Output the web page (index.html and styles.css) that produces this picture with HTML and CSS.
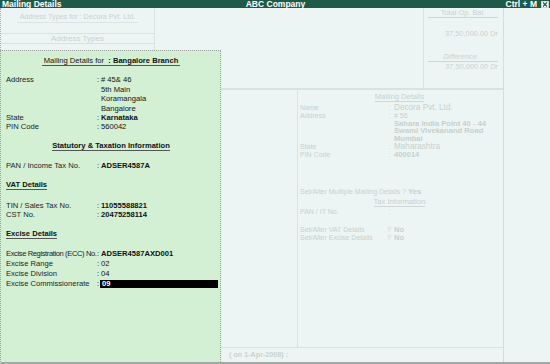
FILE: index.html
```html
<!DOCTYPE html>
<html lang="en">
<head>
    <meta charset="UTF-8">
    <title>Mailing Details</title>
    <link rel="stylesheet" href="styles.css">
</head>
<body>

    <div class="titlebar">
        <span class="tb-left">Mailing Details</span>
        <span class="tb-center">ABC Company</span>
        <span class="tb-right">Ctrl + M
            <svg class="close-box" width="8" height="7" viewBox="0 0 8 7">
                <rect x="0.5" y="0.5" width="7" height="6" fill="#fff" stroke="#c8d8d2"/>
                <path d="M2 1.5 L6 5.5 M6 1.5 L2 5.5" stroke="#1f5a48" stroke-width="1.2"/>
            </svg>
        </span>
    </div>

    <div class="screen">
        <div class="main">
            <!-- верх: типы адресов и сальдо -->
            <div class="top">
                <div class="addr-types">
                    <div class="at-title"><span>Address Types for : Decora Pvt. Ltd.</span></div>
                    <div class="at-head">Address Types</div>
                </div>
                <div class="top-gap"></div>
                <div class="opbal">
                    <div class="ob-title">Total Op. Bal.</div>
                    <div class="ob-amount">37,50,000.00 Dr</div>
                    <div class="ob-diff">Difference</div>
                    <div class="ob-amount ob-italic">37,50,000.00 Dr</div>
                </div>
            </div>

            <div class="mid">
                <div class="mid-left"></div>
                <div class="company">
                    <div class="co-head"><span>Mailing Details</span></div>
                    <div class="co-rows">
                        <span class="co-label">Name</span><span class="co-colon">:</span><span class="co-value big">Decora Pvt. Ltd.</span>
                        <span class="co-label">Address</span><span class="co-colon">:</span><span class="co-value"># 56</span>
                        <span class="co-label"></span><span class="co-colon"></span><span class="co-value strong">Sahara India Point 40 - 44</span>
                        <span class="co-label"></span><span class="co-colon"></span><span class="co-value strong">Swami Vivekanand Road</span>
                        <span class="co-label"></span><span class="co-colon"></span><span class="co-value strong">Mumbai</span>
                        <span class="co-label">State</span><span class="co-colon">:</span><span class="co-value big">Maharashtra</span>
                        <span class="co-label">PIN Code</span><span class="co-colon">:</span><span class="co-value strong">400014</span>
                    </div>
                    <div class="co-line co-multi">Set/Alter Multiple Mailing Details ? <b>Yes</b></div>
                    <div class="co-head co-tax"><span>Tax Information</span></div>
                    <div class="co-rows co-pan">
                        <span class="co-label">PAN / IT No.</span><span class="co-colon">:</span><span class="co-value"></span>
                    </div>
                    <div class="co-rows co-flags">
                        <span class="co-label">Set/Alter VAT Details</span><span class="co-colon q">?</span><span class="co-value strong">No</span>
                        <span class="co-label">Set/Alter Excise Details</span><span class="co-colon q">?</span><span class="co-value strong">No</span>
                    </div>
                </div>
            </div>

            <div class="foot">( on 1-Apr-2008) :</div>
        </div>
        <div class="aside"></div>

        <!-- окно поверх экрана -->
        <div class="popup">
            <div class="pop-head"><span>Mailing Details for&nbsp; <b>: Bangalore Branch</b></span></div>

            <div class="pop-rows pop-address">
                <span class="p-label">Address</span><span class="p-colon">:</span><span class="p-value"># 45&amp; 46</span>
                <span class="p-label"></span><span class="p-colon"></span><span class="p-value">5th Main</span>
                <span class="p-label"></span><span class="p-colon"></span><span class="p-value">Koramangala</span>
                <span class="p-label"></span><span class="p-colon"></span><span class="p-value">Bangalore</span>
                <span class="p-label">State</span><span class="p-colon">:</span><span class="p-value bold">Karnataka</span>
                <span class="p-label">PIN Code</span><span class="p-colon">:</span><span class="p-value">560042</span>
            </div>

            <div class="pop-section center sec-stat"><span>Statutory &amp; Taxation Information</span></div>

            <div class="pop-rows sec-pan">
                <span class="p-label">PAN / Income Tax No.</span><span class="p-colon">:</span><span class="p-value bold">ADSER4587A</span>
            </div>

            <div class="pop-section sec-vat"><span>VAT Details</span></div>

            <div class="pop-rows sec-tin">
                <span class="p-label">TIN / Sales Tax No.</span><span class="p-colon">:</span><span class="p-value bold">11055588821</span>
                <span class="p-label">CST No.</span><span class="p-colon">:</span><span class="p-value bold">20475258114</span>
            </div>

            <div class="pop-section sec-excise"><span>Excise Details</span></div>

            <div class="pop-rows sec-ecc">
                <span class="p-label tight">Excise Registration (ECC) No.</span><span class="p-colon">:</span><span class="p-value bold">ADSER4587AXD001</span>
                <span class="p-label">Excise Range</span><span class="p-colon">:</span><span class="p-value">02</span>
                <span class="p-label">Excise Division</span><span class="p-colon">:</span><span class="p-value">04</span>
                <span class="p-label">Excise Commissionerate</span><span class="p-colon">:</span><span class="p-value"><span class="cursor">09</span></span>
            </div>
        </div>
    </div>

</body>
</html>
```

FILE: styles.css
```css
/* Основа */
body {
    margin: 0;
    width: 550px;
    height: 364px;
    overflow: hidden;
    font-family: "Liberation Sans", Arial, sans-serif;
    background: #edf5f4;
    color: #111;
}

/* Заголовок окна */
.titlebar {
    height: 8px;
    background: #1f5a48;
    color: #fff;
    font-weight: bold;
    font-size: 8.5px;
    line-height: 8px;
    display: grid;
    grid-template-columns: 1fr auto 1fr;
    padding: 0 1px 0 2px;
}

.tb-right {
    justify-self: end;
    display: flex;
    align-items: center;
    gap: 4px;
}

.close-box {
    display: block;
}

/* Экран под окном */
.screen {
    position: relative;
    display: flex;
    height: 354px;
    border-bottom: 2px solid #a2a8a6;
    border-left: 1px dotted #a8aeac;
}

.main {
    width: 503px;
    box-sizing: border-box;
    border-right: 1px solid #d6dedc;
    display: flex;
    flex-direction: column;
}

.aside {
    flex: 1;
}

.top {
    height: 82px;
    box-sizing: border-box;
    border-bottom: 2px solid #dae2e0;
    display: flex;
    color: #c9d2d0;
    font-size: 7.2px;
}

.addr-types {
    width: 154px;
    box-sizing: border-box;
    border-right: 1px solid #dae2e0;
}

.at-title {
    height: 26px;
    box-sizing: border-box;
    padding-top: 5px;
    line-height: 8px;
    text-align: center;
    border-bottom: 1px solid #dae2e0;
}

.at-title span {
    display: inline-block;
    padding: 0 3px 1px;
    border-bottom: 1px solid #dce4e2;
}

.at-head {
    height: 10px;
    box-sizing: border-box;
    line-height: 9px;
    font-size: 8px;
    text-align: center;
    border-bottom: 1px solid #dae2e0;
}

.top-gap {
    flex: 1;
}

.opbal {
    width: 80px;
    box-sizing: border-box;
    border-left: 1px solid #dae2e0;
    padding: 0 5px 0 4px;
    line-height: 8px;
    font-size: 7.4px;
}

.ob-title {
    margin-top: 1px;
    text-align: center;
    border-bottom: 1px solid #cdd6d4;
}

.ob-amount {
    margin-top: 12px;
    text-align: right;
}

.ob-diff {
    margin-top: 15px;
    text-align: center;
    font-style: italic;
    border-bottom: 1px solid #cdd6d4;
    padding-right: 6px;
}

.ob-italic {
    margin-top: 1px;
    font-style: italic;
}

.mid {
    height: 258px;
    box-sizing: border-box;
    border-bottom: 1px solid #dae2e0;
    display: flex;
}

.mid-left {
    width: 296px;
}

/* Реквизиты компании (блеклые) */
.company {
    flex: 1;
    border-left: 1px solid #dae2e0;
    padding: 3px 0 0 2px;
    color: #c7d0ce;
    font-size: 7px;
}

.co-head {
    line-height: 8px;
    text-align: center;
    font-size: 7.6px;
    padding-right: 4px;
}

.co-head span {
    border-bottom: 1px solid #cfd8d6;
    display: inline-block;
}

.co-rows {
    display: grid;
    grid-template-columns: 89px 5px 1fr;
    line-height: 7.8px;
    margin-top: 2px;
}

.co-value.big {
    font-size: 8.2px;
}

.co-value.strong {
    font-size: 7.6px;
    font-weight: bold;
}

.co-line {
    line-height: 8px;
}

.co-multi {
    margin-top: 29px;
}

.co-multi b {
    font-size: 7.6px;
}

.co-tax {
    margin-top: 2px;
}

.co-pan {
    margin-top: 1px;
    line-height: 8px;
}

.co-flags {
    margin-top: 10px;
    line-height: 8px;
}

.co-colon.q {
    margin-left: -2px;
}

.foot {
    flex: 1;
    padding-left: 228px;
    line-height: 14px;
    font-size: 7.2px;
    font-weight: bold;
    color: #c9d2d0;
}

/* Окно "Mailing Details for" */
.popup {
    position: absolute;
    left: -1px;
    top: 42px;
    bottom: 0;
    width: 221px;
    box-sizing: border-box;
    background: #d4f0d4;
    border: 1px dotted #9aa09e;
    border-bottom: 0;
    padding: 6px 2px 0 5px;
    font-size: 7.6px;
}

.pop-head {
    line-height: 8px;
    text-align: center;
    padding-right: 2px;
}

.pop-head span {
    display: inline-block;
    padding: 0 2px;
    border-bottom: 1px solid #555;
}

.pop-rows {
    display: grid;
    grid-template-columns: 91px 3px 1fr;
    line-height: 9.4px;
}

.p-label {
    color: #222;
    white-space: nowrap;
}

.p-label.tight {
    letter-spacing: -0.4px;
}

.p-value {
    padding-left: 1px;
}

.bold {
    font-weight: bold;
}

.pop-address {
    margin-top: 9.3px;
}

.pop-section {
    line-height: 8px;
    font-weight: bold;
}

.pop-section span {
    display: inline-block;
    border-bottom: 1px solid #555;
}

.center {
    text-align: center;
    padding-right: 2px;
}

.sec-stat {
    margin-top: 10px;
}

.sec-pan {
    margin-top: 10.3px;
}

.sec-vat {
    margin-top: 10.6px;
}

.sec-tin {
    margin-top: 11px;
}

.sec-excise {
    margin-top: 10.2px;
}

.sec-ecc {
    margin-top: 10px;
    line-height: 10px;
}

.cursor {
    display: block;
    margin-top: 0.7px;
    height: 8.6px;
    line-height: 8.6px;
    background: #000;
    color: #fff;
    font-weight: bold;
    padding-left: 2px;
    margin-left: -1px;
}
```
